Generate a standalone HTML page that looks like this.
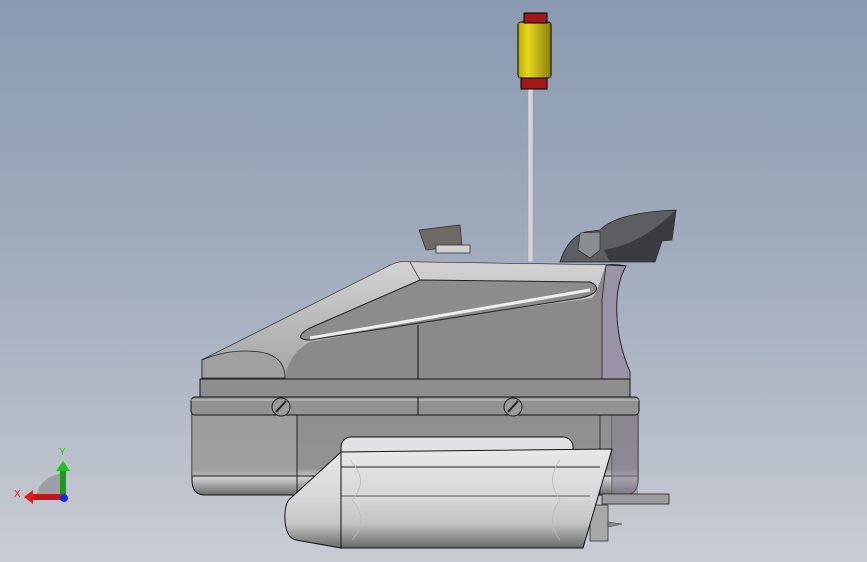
<!DOCTYPE html>
<html><head><meta charset="utf-8"><style>
html,body{margin:0;padding:0;width:867px;height:562px;overflow:hidden}
svg{display:block}
</style></head><body>
<svg width="867" height="562" viewBox="0 0 867 562" xmlns="http://www.w3.org/2000/svg">
<defs>
<linearGradient id="bg" x1="0" y1="0" x2="0" y2="1">
<stop offset="0" stop-color="#8a9ab0"/><stop offset="0.55" stop-color="#a6b0c0"/><stop offset="1" stop-color="#c9ccd3"/>
</linearGradient>
<linearGradient id="yel" x1="0" y1="0" x2="1" y2="0">
<stop offset="0" stop-color="#b8a800"/><stop offset="0.3" stop-color="#e6d820"/><stop offset="1" stop-color="#8c8010"/>
</linearGradient>
<linearGradient id="low" x1="0" y1="0" x2="0" y2="1">
<stop offset="0" stop-color="#8e8e8e"/><stop offset="0.72" stop-color="#929292"/><stop offset="0.82" stop-color="#cfcfcf"/><stop offset="1" stop-color="#6a6a6a"/>
</linearGradient>
<linearGradient id="cyl" x1="0" y1="0" x2="0" y2="1">
<stop offset="0" stop-color="#e8e8ea"/><stop offset="0.5" stop-color="#d6d6d8"/><stop offset="0.75" stop-color="#c4c4c4"/><stop offset="1" stop-color="#6a6a6a"/>
</linearGradient>
<linearGradient id="top" x1="0" y1="0" x2="0" y2="1">
<stop offset="0" stop-color="#e0e0e0"/><stop offset="1" stop-color="#a8a8a8"/>
</linearGradient>
</defs>
<rect width="867" height="562" fill="url(#bg)"/>

<!-- antenna -->
<rect x="528" y="86" width="5" height="176" fill="#d6d6d8" stroke="#999" stroke-width="0.5"/>
<rect x="521" y="76" width="26" height="13" fill="#a01818" stroke="#000" stroke-width="1"/>
<rect x="518" y="22" width="33" height="56" rx="3" fill="url(#yel)" stroke="#000" stroke-width="1"/>
<rect x="524" y="13" width="23" height="10" fill="#a01818" stroke="#000" stroke-width="1"/>

<!-- tab -->
<polygon points="419,230 460,225 462,246 426,250" fill="#6e6964" stroke="#333" stroke-width="0.8"/>
<rect x="436" y="245" width="34" height="8" fill="#d0d0d0" stroke="#333" stroke-width="0.8"/>

<!-- scoop -->
<path d="M560,262 C565,245 575,235 585,232 L600,230 C610,220 630,212 676,210 L672,240 L662,241 L655,262 L600,262 Z" fill="#5c5e62" stroke="#222" stroke-width="0.8"/>
<path d="M580,233 L600,232 L600,250 L590,258 L578,250 Z" fill="#8a8e92" stroke="#222" stroke-width="0.6"/>
<path d="M604,250 C630,245 650,235 676,210 L672,240 L662,241 L655,262 L610,262 Z" fill="#3a3b3e"/>

<!-- lower housing -->
<path d="M192,400 L638,400 L638,480 Q638,495 624,495 L205,495 Q192,495 192,480 Z" fill="url(#low)" stroke="#111" stroke-width="1"/>
<path d="M192,415 L297,415 L297,476 L192,476 Z" fill="#a6a6a6" opacity="0.6"/>
<line x1="297" y1="415" x2="297" y2="495" stroke="#222" stroke-width="1"/>
<line x1="192" y1="476" x2="638" y2="476" stroke="#222" stroke-width="1"/>
<path d="M600,415 L600,495" stroke="#333"/>
<path d="M612,415 L612,495" stroke="#555"/>
<rect x="612" y="400" width="26" height="95" fill="#8a8494" opacity="0.6"/>

<!-- upper housing -->
<path d="M202,360 L385,268 Q398,260 410,262 L606,265 Q616,264 626,266 C612,290 614,335 630,372 L630,400 L202,400 Z" fill="#8a8a8a" stroke="#111" stroke-width="1"/>
<path d="M202,360 L385,268 Q398,260 410,262 L606,265 C600,280 598,292 592,298 L420,322 L310,342 C295,350 288,362 285,378 L202,378 Z" fill="url(#top)" opacity="0.85"/>
<path d="M202,360 Q230,348 260,352 Q285,356 285,378 L202,378 Z" fill="#a0a0a0" stroke="#222" stroke-width="0.8"/>
<path d="M606,265 L626,266 C612,290 614,335 630,372 L630,400 L602,400 L602,300 Z" fill="#9a92a6" stroke="#222" stroke-width="0.8"/>
<!-- slot -->
<path d="M420,280 L590,282 C600,286 600,294 580,298 L310,340 C295,340 300,333 310,328 Z" fill="#8c8c8c" stroke="#222" stroke-width="1"/>
<path d="M310,338 L590,290" stroke="#eee" stroke-width="3"/>
<path d="M410,262 L420,280" stroke="#444" stroke-width="0.8" fill="none"/>
<line x1="418" y1="325" x2="418" y2="414" stroke="#111" stroke-width="1"/>
<!-- bands -->
<rect x="200" y="379" width="430" height="18" fill="#8e8e8e" stroke="#111" stroke-width="1"/>
<rect x="191" y="397" width="448" height="18" rx="4" fill="#929292" stroke="#111" stroke-width="1"/>
<line x1="191" y1="400" x2="639" y2="400" stroke="#ccc" stroke-width="1"/>
<line x1="418" y1="397" x2="418" y2="415" stroke="#111"/>
<!-- screws -->
<circle cx="281" cy="407" r="9" fill="#9a9a9a" stroke="#222"/>
<line x1="276" y1="412" x2="286" y2="401" stroke="#222" stroke-width="2"/>
<circle cx="513" cy="407" r="9" fill="#9a9a9a" stroke="#222"/>
<line x1="508" y1="412" x2="518" y2="401" stroke="#222" stroke-width="2"/>

<!-- bracket -->
<rect x="602" y="494" width="67" height="10" fill="#9c9c9c" stroke="#222" stroke-width="0.8"/>
<rect x="590" y="505" width="18" height="36" fill="#a8a8a8" stroke="#333" stroke-width="0.8"/>
<path d="M608,522 L622,524 L608,527 Z" fill="#888" stroke="#333" stroke-width="0.5"/>

<!-- cylinder -->
<rect x="341" y="437" width="232" height="30" rx="10" fill="#e2e2e4" stroke="#111"/>
<path d="M341,452 L612,449 L583,548 L341,548 Z" fill="url(#cyl)" stroke="#111" stroke-width="1"/>
<path d="M341,452 L292,497 Q284,502 285,520 Q286,538 296,540 L341,548 Z" fill="url(#cyl)" stroke="#111" stroke-width="1"/>
<line x1="341" y1="467" x2="600" y2="467" stroke="#222"/>
<line x1="341" y1="496" x2="590" y2="496" stroke="#333" stroke-width="0.8"/>
<line x1="341" y1="452" x2="341" y2="548" stroke="#111"/>
<path d="M350,460 Q370,480 352,500 Q370,520 352,540 M560,460 Q545,480 560,500 Q545,520 560,540" stroke="#bbb" fill="none" stroke-width="0.8"/>

<!-- axis triad -->
<path d="M62,474 A26,26 0 0 0 36,500 L62,500 Z" fill="#8e9098" opacity="0.7"/>
<rect x="60" y="470" width="6" height="30" fill="#1a9a1a"/>
<polygon points="56,471 63,461 70,471" fill="#22c022"/>
<rect x="32" y="494" width="30" height="6" fill="#c01818"/>
<polygon points="33,490 24,497 33,504" fill="#e02020"/>
<circle cx="64" cy="498" r="4" fill="#1a2ae0"/>
<text x="59" y="455" font-family="Liberation Sans, sans-serif" font-size="10" fill="#22c022">Y</text>
<text x="14" y="497" font-family="Liberation Sans, sans-serif" font-size="10" fill="#e02020">X</text>
</svg>
</body></html>
